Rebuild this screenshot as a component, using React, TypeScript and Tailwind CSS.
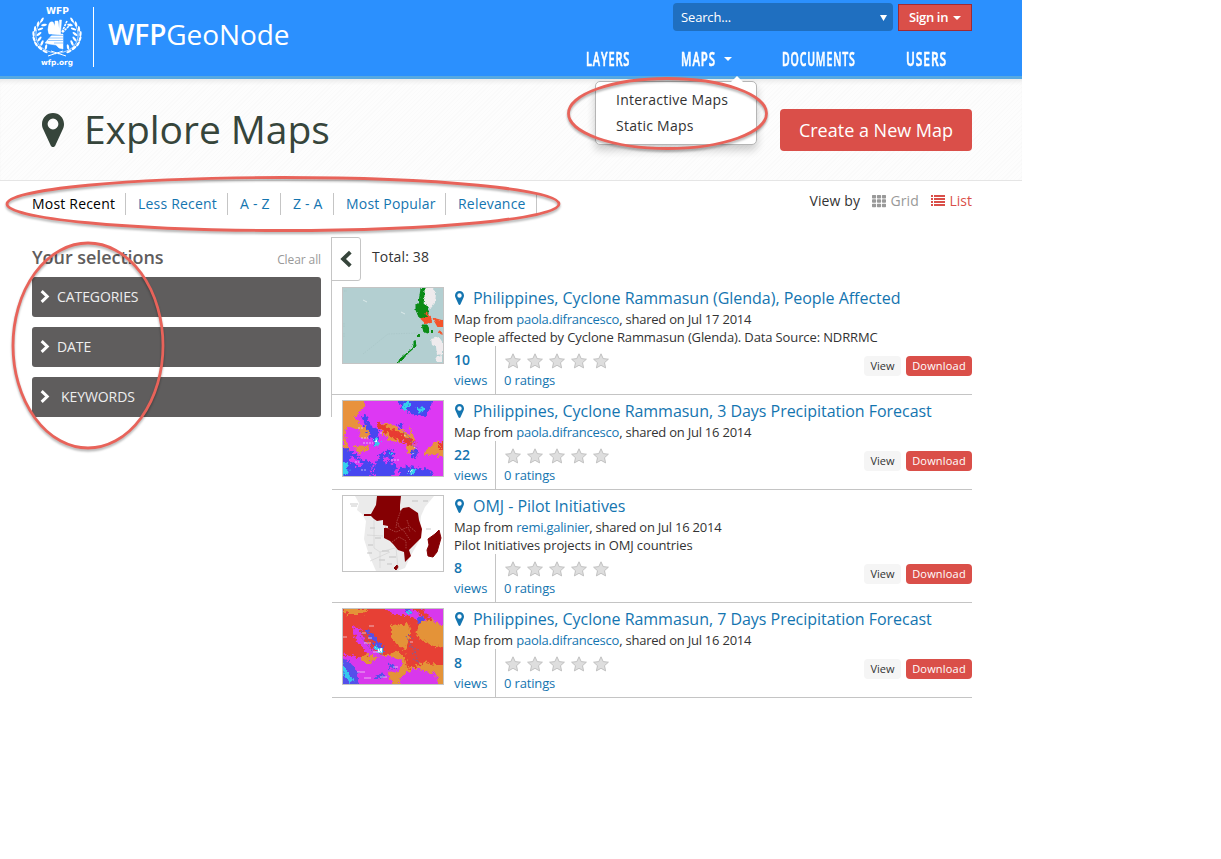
import type { ReactNode } from "react";
import { FaTh } from "react-icons/fa";

const SANS = "font-['Open_Sans',sans-serif]";

function Pin({ className }: { className: string }) {
  return (
    <svg viewBox="0 0 22 34" className={className} fill="currentColor">
      <path
        fillRule="evenodd"
        d="M11 0C4.900 0 0 4.900 0 11c0 2 .4 3.600 1.100 5L8.600 32.200C9 33.300 9.900 34 11 34s2-.7 2.400-1.800L20.900 16c.7-1.400 1.100-3 1.100-5C22 4.900 17.100 0 11 0zm0 5.600a5.400 5.400 0 1 1 0 10.800a5.400 5.400 0 0 1 0-10.800z"
      />
    </svg>
  );
}

function Chevron({ className, left = false }: { className: string; left?: boolean }) {
  return (
    <svg viewBox="0 0 10 14" className={className} fill="none" stroke="currentColor" strokeWidth="3.200">
      <path d={left ? "M8.600 1.200L2.600 7l6 5.800" : "M1.400 1.200L7.400 7l-6 5.800"} />
    </svg>
  );
}

function ListIcon() {
  return (
    <svg viewBox="0 0 14 12" className="mr-1 h-3 w-[14px] fill-[#da4f49]">
      <path d="M0 0h2v2H0zM0 3h2v2H0zM0 6h2v2H0zM0 9h2v2H0zM3 0h11v2H3zM3 3h11v2H3zM3 6h11v2H3zM3 9h11v2H3z" />
    </svg>
  );
}

const LEAVES = [
  [11, 13, -60], [7, 17, -75], [4, 22, -85], [2.5, 27, -95], [3, 32, -110], [5, 37, -125], [9, 41, -140], [14, 44.5, -155],
  [13, 18, -10], [9.5, 22, -20], [8, 27, -35], [8.5, 32, -50], [11, 36, -65], [15, 40, -80],
];

function Logo() {
  const wreath = (
    <g>
      <path d="M12 13C4 20 2 32 10 40c4 4 9 4.500 15 7" fill="none" stroke="white" strokeWidth="0.7" />
      {LEAVES.map(([x, y, r], i) => (
        <ellipse key={i} cx={x} cy={y} rx="2.900" ry="1.150" fill="white" transform={`rotate(${r} ${x} ${y})`} />
      ))}
    </g>
  );
  return (
    <svg viewBox="0 0 52 64" className="h-16 w-[52px] shrink-0">
      <text x="15" y="7.500" textLength="23" lengthAdjust="spacingAndGlyphs" fill="white" fontFamily="DejaVu Sans" fontWeight="700" fontSize="8.500">WFP</text>
      <g transform="translate(0 1)">{wreath}</g>
      <g transform="translate(52 1) scale(-1 1)">{wreath}</g>
      <path d="M17 50l15-5M35 50l-15-5" stroke="white" strokeWidth="1" fill="none" />
      <path d="M18 18q1-3 4-2l2 4 0-5 3 0 2 13h-11q-2-4 0-10zM28.500 14l2 0-1 14h-1.500zM32 28v15l-4-1-3-3-7-1-4-1 7-8z" fill="white" stroke="white" strokeWidth="0.5" />
      <path d="M36 15l-5 11M40 18l-9 9" stroke="white" strokeWidth="1.600" strokeDasharray="2.500 .7" />
      <path d="M20 29.500h12M18 32h14M17 34.500h15M23 37h9" stroke="#2b90fe" strokeWidth="0.5" />
      <text x="10" y="59" textLength="32" lengthAdjust="spacingAndGlyphs" fill="white" fontFamily="DejaVu Sans" fontWeight="700" fontSize="7.500">wfp.org</text>
    </svg>
  );
}

function NavItem({ children, className }: { children: ReactNode; className: string }) {
  return (
    <a className={`block w-10 origin-left whitespace-nowrap text-[19px] leading-[26px] font-semibold tracking-[1.5px] text-white [-webkit-text-stroke:0.6px_white] ${className}`}>
      {children}
    </a>
  );
}

function Star() {
  return (
    <svg viewBox="0 0 16 16" className="size-4">
      <path d="M8 .8l2.200 4.800 5.200.6-3.900 3.500 1.100 5.200L8 12.300l-4.600 2.600 1.100-5.200L.6 6.200l5.200-.6z" fill="#dedede" stroke="#bcbcbc" strokeWidth="0.9" />
    </svg>
  );
}

function PhilippinesMap() {
  return (
    <svg viewBox="0 0 100 75" className="size-full bg-[#b3cfd1]">
      <defs>
        <filter id="coast" x="0" y="0" width="100" height="75" filterUnits="userSpaceOnUse"><feTurbulence type="fractalNoise" baseFrequency="0.35" numOctaves="2" seed="4" /><feDisplacementMap in="SourceGraphic" scale="3" xChannelSelector="R" yChannelSelector="G" /></filter>
      </defs>
      <path d="M20 66l25-20 30-1M1 3h3M1 35v5M1 45v5" stroke="#a6c3c5" strokeWidth=".6" strokeDasharray="1.500 1" fill="none" />
      <path d="M20 12l4 2M58 24l4 2" stroke="#dceaea" />
      <g filter="url(#coast)">
        <path d="M79 0h11l3 6-1 9-4 5-6-3-4-7z" fill="#efebed" />
        <path d="M78 0h3l0 8-1 8 5 3 0 7-3 5-6-2-3-7 0-5 3-2z" fill="#078a12" stroke="#078a12" />
        <path d="M79 37l5 0 2 4-1 4-4-1z" fill="#078a12" stroke="#078a12" />
        <path d="M55 75l2-4 12-10 2-4v-4l1 0 1 5-8 7-6 7z" fill="#078a12" stroke="#078a12" />
        <path d="M74 46h3v3h-3zM88 42h2v3h-2z" fill="#078a12" />
        <path d="M79 31l8-2 1 5-5 1zM91 31l8 2 1 5-5 0zM83 25l3 4M96 43l3 3" fill="#f5532b" stroke="#f5532b" strokeWidth="2" />
        <path d="M88 51l8-2 4 6v11l-6 1-1-8-4-2zM92 69l7-1v6h-5z" fill="#efebed" />
      </g>
    </svg>
  );
}

function RainFilter({ id, seed }: { id: string; seed: number }) {
  return (
    <filter id={id} x="0" y="0" width="100" height="75" filterUnits="userSpaceOnUse">
      <feTurbulence type="fractalNoise" baseFrequency="0.32" numOctaves="3" seed={seed} />
      <feDisplacementMap in="SourceGraphic" scale="8" xChannelSelector="R" yChannelSelector="G" />
    </filter>
  );
}

function RainThree() {
  return (
    <svg viewBox="0 0 100 75" className="size-full bg-[#dd39f3]">
      <defs><RainFilter id="rain3" seed={7} /></defs>
      <g filter="url(#rain3)">
        <rect x="-10" y="-10" width="120" height="95" fill="#dd39f3" />
        <path d="M-5-5h28l-2 12-9 8 5 8-2 6-10-4-4 10-6 2z" fill="#e8923d" />
        <path d="M14 23l10 2 2 12-8 1zM11 44l14 1 2 4-12 3zM35 21l14 3 17 9 2-7 3 12 1 18-7-3-3-11-14-2-11-10z" fill="#e8923d" />
        <path d="M80 52l11-10 14-4v17l-20-1zM0 35l4 3 2 12-6-1zM33 69l8-6 5 6-2 6z" fill="#e8923d" />
        <path d="M36 23l20 9 15 9-4 3-16-8-14-9zM97 42l6-2v8h-6z" fill="#e83b31" stroke="#e83b31" strokeWidth="2" />
        <path d="M23 14l4 10 8 5 1 11-3 6-5-9-5-9-5-12zM54-5h38l-9 20-14-2-11-6zM54 22l6 3-3 4z" fill="#4646f0" />
        <path d="M-5 44l12 6 14 10 8 2-3 22h-32zM36 54l11-6 6 5-7 6 8 7-8 13-18-5zM68 48l7 1-1 9-6-1zM56 67l10-2 24 5-4 9H56z" fill="#4646f0" />
        <path d="M8 54l12 9-3 4-11-8zM40 56l6 1-3 7z" fill="#dd39f3" />
        <path d="M31 39l3-3 3 6-4 3zM59 4l4-3 5 3-6 5zM74 7l7 0 1 3-6 1zM-2 60l6 3 1 9-7 4zM46 52l4-1-1 3zM67 68l5 1-1 4-4-1z" fill="#35d1ec" stroke="#35d1ec" />
        <path d="M32 39l3 1-1 3zM65 69l4 2" fill="#fff" stroke="#fff" />
      </g>
      <path d="M15 27h6M18 37h7M20 42h10M37 32h3M12 61h6M18 69h6M48 59h8M61 34l2 1m8 11l3 2m-5 5l3-1" stroke="#e8eaff" strokeWidth=".7" strokeDasharray="2 1" />
      <path d="M60 31l4 3 4 4M63 37l8 5M68 44l7 3M69 49l5 3" fill="none" stroke="#825f9d" strokeDasharray="1 1" />
    </svg>
  );
}

function RainSeven() {
  return (
    <svg viewBox="0 0 100 75" className="size-full bg-[#e74034]">
      <defs><RainFilter id="rain7" seed={12} /></defs>
      <g filter="url(#rain7)">
        <rect x="-10" y="-10" width="120" height="95" fill="#e74034" />
        <path d="M48 17l17-2 3 9-3 8-2 9-8-4-7-9zM76 14l28-10v36l-16-4-15-9zM0 0h24l-3 5-18 0zM14 49l14-5 17 2 10-4 7 6 2 11 9-2 10-4 9 3h21v28H25z" fill="#e49338" />
        <path d="M44-5h21l19 17-12-2-10-4-10 0-8-6zM74-5h32v26L91 12zM9 17l8 3 5 12 8 8 8 4 1 6-14-5-11-12zM-5 45l20 3 10 7 12-8 13 1 9 5-2 9-12 2 8 21H-5z" fill="#d837ec" />
        <path d="M59 67l12-8 22 6 5 22-47 2z" fill="#d837ec" />
        <path d="M24 20l6 5 9 11 2 7-7-1-4-10-9-9zM62-4h7l-1 8-5-1zM74 9l7-2-1 5-5 2zM-5 49l11 3 7 9 5 24-22 4zM45 56l6-2 1 5-6 1zM32 68l8-4 2 3-5 4z" fill="#5450ea" />
        <path d="M33 37l6 3 1 4-6-1zM64 1l4 1-2 3zM-1 56l5 5 6 12-5-1-6-9z" fill="#35c9ed" stroke="#35c9ed" />
        <path d="M34 40l4 1-2 2z" fill="#fff" stroke="#fff" />
      </g>
      <path d="M18 22l14 20M17 27l12 15M63 27l9 16 3 10M65 25l5 5M66 37l10 4M69 45l5-3M70 50l7 4" fill="none" stroke="#7360a6" strokeDasharray="1.500 1.500" />
      <path d="M0 28h4M26 17h5M19 24h4M25 29h4M21 34h7M30 43h9M67 33h3M14 63h8M21 69h7M50 58h5M37 68h7" stroke="#f5e8f3" strokeWidth=".7" />
    </svg>
  );
}

function AfricaMap() {
  return (
    <svg viewBox="0 0 100 75" className="size-full bg-white">
      <path d="M12 0h79L82 11l-4 9-2 25-9 16-5 11-8 3H33l-7-16-5-16 2-18-4-7-5-4 2-7z" fill="#ebebeb" />
      <path d="M7 8h8M8 10h6M27 32h5M32 42h6M25 49h5M24 57h5M39 55h7M36 64h6M46 61h7M41 24h6M67 19h4M83 33h5M69 5h6M80 5h5M44 68h5" stroke="#aaa" strokeWidth=".6" />
      <path d="M31 24v28l6 4 15-4M24 39l16 1M37 56v16M27 65l20-9M53 51l2 22" stroke="#d0d0d0" strokeWidth=".6" fill="none" />
      <path d="M34 0L58 0 57 9 57 15 60 12 66 11 75 17 76 24 79 33 78 42 70 50 66 54 68 60 64 64 62 66 61 56 55 54 50 48 47 45 41 42 41 32 45 32 45 30 40 29 40 24 34 25 31 23 28 20 21 20 21 18 28 18 33 9z" fill="#850003" />
      <path d="M96 34l2 8-4 14-4 5-5-1-1-6 2-5-1-6 7-5z" fill="#850003" stroke="#850003" />
      <path d="M51 72l3-3 1 2-2 3z" fill="#850003" stroke="#850003" />
      <path d="M58 14l-4 11-1 7M42 31l11 5 12-5 2 5M49 46l7-5 7 4 0 8M55 27l1 4 5 4 6 9M64 24l2 6 7 6" fill="none" stroke="#bd6b67" strokeWidth=".6" strokeDasharray="1.500 1" />
    </svg>
  );
}

type Row = { title: string; author: string; date: string; desc?: string; views: number; art: ReactNode };

const ROWS: Row[] = [
  { title: "Philippines, Cyclone Rammasun (Glenda), People Affected", author: "paola.difrancesco", date: "Jul 17 2014", desc: "People affected by Cyclone Rammasun (Glenda). Data Source: NDRRMC", views: 10, art: <PhilippinesMap /> },
  { title: "Philippines, Cyclone Rammasun, 3 Days Precipitation Forecast", author: "paola.difrancesco", date: "Jul 16 2014", views: 22, art: <RainThree /> },
  { title: "OMJ - Pilot Initiatives", author: "remi.galinier", date: "Jul 16 2014", desc: "Pilot Initiatives projects in OMJ countries", views: 8, art: <AfricaMap /> },
  { title: "Philippines, Cyclone Rammasun, 7 Days Precipitation Forecast", author: "paola.difrancesco", date: "Jul 16 2014", views: 8, art: <RainSeven /> },
];

function MapRow({ row }: { row: Row }) {
  return (
    <article className="ml-px flex border-b border-[#c4c4c4] pl-[10px]">
      <div className="mt-[5px] h-[77px] w-[102px] shrink-0 border border-[#c4c4c4]">{row.art}</div>
      <div className="ml-[10px] flex flex-1 flex-col whitespace-nowrap">
        <div className="flex h-[46px] flex-col pt-[5px]">
          <h3 className="flex h-[22px] items-center text-[16px] tracking-[-0.03px] text-[#1475b0]">
            <Pin className="mr-[9px] ml-px h-[14px] w-[9px]" />
            {row.title}
          </h3>
          <p className="h-[19px] text-[13px] leading-[20px] tracking-[-0.23px] text-[#333]">
            <span className="tracking-[-0.1px]">Map from </span>
            <a className="text-[#1475b0]">{row.author}</a>, shared on {row.date}
          </p>
        </div>
        {row.desc && <p className="h-[18px] text-[13px] leading-[18px] tracking-[-0.12px] text-[#333]">{row.desc}</p>}
        <div className="flex h-12 text-[13px] text-[#1475b0]">
          <div className="w-[42px] border-r border-[#c4c4c4]">
            <div className="h-6 pt-[3px] text-[14px] leading-[22px] font-semibold">{row.views}</div>
            <div className="leading-[20px]">views</div>
          </div>
          <div className="pl-2">
            <div className="flex h-6 gap-[6px] pt-[7px] pl-px">
              {[0, 1, 2, 3, 4].map((n) => <Star key={n} />)}
            </div>
            <div className="leading-[20px] tracking-[-0.15px]">0 ratings</div>
          </div>
          <div className="mt-[10px] ml-auto flex h-5 gap-[5px] text-[11px] leading-5">
            <a className="w-[37px] rounded-[4px] bg-[#f5f5f5] text-center text-[#333]">View</a>
            <a className="w-[66px] rounded-[4px] bg-[#da4f49] text-center tracking-[0.2px] text-white">Download</a>
          </div>
        </div>
      </div>
    </article>
  );
}

const SORTS = [
  { label: "Most Recent", cls: "w-[94px] text-black" },
  { label: "Less Recent", cls: "w-[102px] pl-3 text-[#1475b0]" },
  { label: "A - Z", cls: "w-[53px] pl-3 text-[#1475b0]" },
  { label: "Z - A", cls: "w-[53px] pl-3 text-[#1475b0]" },
  { label: "Most Popular", cls: "w-[112px] pl-3 text-[#1475b0]" },
  { label: "Relevance", cls: "w-[91px] pl-3 text-[#1475b0]" },
];

export default function App() {
  return (
    <div className={`relative h-[859px] w-[1221px] overflow-hidden bg-white text-[#333] ${SANS}`}>
      <div className="w-[1022px]">
        <header className="flex h-[79px] justify-between border-b-[3px] border-[#56a9e2] bg-[#2b90fe] pr-[50px] pl-[31px]">
          <div className="flex pt-[6px]">
            <Logo />
            <div className="mt-px ml-[10px] h-[60px] w-px bg-white" />
            <div className="ml-[14px] pt-2 text-[28px] leading-[40px] tracking-[-0.1px] text-white">
              <span className="font-semibold">WFP</span>GeoNode
            </div>
          </div>
          <div className="w-[386px]">
            <div className="flex justify-end gap-[5px] pt-[3px] text-[13px] text-white">
              <div className="flex h-7 w-[220px] items-center justify-between rounded bg-[#1f6fc0] pt-px pr-[6px] pl-2 tracking-[-0.15px]">
                Search...
                <svg viewBox="0 0 7 6" className="h-[6px] w-[7px] fill-white"><path d="M0 0h7L3.500 6z" /></svg>
              </div>
              <div className="mt-px flex h-[27px] w-[74px] items-center justify-center gap-[5px] border border-[#a02a34] bg-[#da4f49] font-semibold whitespace-nowrap">
                <span className="w-[39px] tracking-[-0.35px]">Sign in</span>
                <svg viewBox="0 0 8 4" className="h-1 w-2 fill-white"><path d="M0 0h8L4 4z" /></svg>
              </div>
            </div>
            <nav className="mt-[15px] flex">
              <div className="w-[95px]"><NavItem className="scale-x-[0.58]">LAYERS</NavItem></div>
              <div className="flex w-[101px] items-center">
                <div className="w-[43px]"><NavItem className="scale-x-[0.6]">MAPS</NavItem></div>
                <svg viewBox="0 0 8 4" className="h-1 w-2 fill-white"><path d="M0 0h8L4 4z" /></svg>
              </div>
              <div className="w-[124px]"><NavItem className="scale-x-[0.555]">DOCUMENTS</NavItem></div>
              <NavItem className="scale-x-[0.63]">USERS</NavItem>
            </nav>
          </div>
        </header>

        <section className="flex h-[102px] items-start border-b border-[#e5e5e5] bg-[repeating-linear-gradient(135deg,#fdfdfd_0px,#fdfdfd_2px,#fafafa_2px,#fafafa_3px)] pr-[50px] pl-[42px] shadow-[inset_0_5px_5px_-3px_#e6e6e6]">
          <Pin className="mt-[34px] h-[34px] w-[22px] text-[#36453b]" />
          <h1 className="ml-[20px] pt-[24px] text-[39px] leading-[51px] tracking-[-0.05px] text-[#36453b]">Explore Maps</h1>
          <button className="mt-[30px] ml-auto h-[42px] w-[192px] rounded bg-[#da4f49] text-[18px] text-white">Create a New Map</button>
        </section>

        <div className="flex h-14 justify-between pr-[50px] pl-8 text-[14px]">
          <ul className="flex pt-3">
            {SORTS.map((s) => (
              <li key={s.label} className={`h-[22px] border-r border-[#c5c5c5] leading-[22px] tracking-[0.2px] whitespace-nowrap ${s.cls}`}>{s.label}</li>
            ))}
          </ul>
          <div className="flex h-5 items-center pt-[19px] whitespace-nowrap">
            <span className="w-[63px] tracking-[0.1px]">View by</span>
            <FaTh className="mr-1 size-[14px] text-[#999]" />
            <span className="w-[41px] tracking-[0.1px] text-[#999]">Grid</span>
            <ListIcon />
            <span className="text-[#da4f49]">List</span>
          </div>
        </div>

        <main className="flex pr-[50px] pl-8">
          <aside className="h-[180px] w-[289px]">
            <div className="flex h-10 justify-between">
              <h2 className="pt-[7px] text-[18px] leading-[26px] font-semibold tracking-[-0.05px] text-[#5f5d5d]">Your selections</h2>
              <a className="pt-3 text-[12px] leading-[21px] tracking-[-0.1px] text-[#999]">Clear all</a>
            </div>
            <div className="flex flex-col gap-[10px]">
              {["CATEGORIES", "DATE", "KEYWORDS"].map((label) => (
                <div key={label} className="flex h-10 items-center rounded-[3px] bg-[#5f5d5d] pb-[2px] pl-2 text-[14px] tracking-[-0.08px] text-[#eee]">
                  <Chevron className="mr-[7px] h-[13px] w-[10px] text-white" />
                  <span className={label === "KEYWORDS" ? "pl-1" : ""}>{label}</span>
                </div>
              ))}
            </div>
          </aside>
          <div className="ml-[10px] h-[180px] w-px shrink-0 bg-[#c5c5c5]" />
          <div className="-ml-px flex-1">
            <div className="flex h-[45px]">
              <div className="flex h-11 w-[30px] items-center justify-center rounded-r-[3px] border border-[#c5c5c5] text-[#36453b]">
                <Chevron left className="h-[18px] w-[12px]" />
              </div>
              <span className="ml-[11px] pt-[9px] text-[14px] leading-[22px] tracking-[0.15px]">Total: 38</span>
            </div>
            {ROWS.map((row, i) => <MapRow key={i} row={row} />)}
          </div>
        </main>
      </div>

      <div className="absolute top-[81px] left-[595px] h-[64px] w-[162px] rounded-[5px] border border-[#b5b5b5] bg-white pt-[5px] pl-5 text-[14px] leading-[26px] tracking-[0.25px] shadow-[0_5px_9px_rgba(0,0,0,0.2)]">
        <svg viewBox="0 0 12 6" className="absolute -top-[6px] left-[135px] h-[6px] w-3 fill-white"><path d="M0 6L6 0l6 6z" /></svg>
        <div>Interactive Maps</div>
        <div>Static Maps</div>
      </div>

      <svg viewBox="0 0 1221 859" className="pointer-events-none absolute inset-0 h-[859px] w-[1221px] drop-shadow-[0_2px_1px_rgba(0,0,0,0.3)]" fill="none" stroke="#e8635a" strokeWidth="2.800">
        <ellipse cx="667.500" cy="113.500" rx="99" ry="35" />
        <ellipse cx="283" cy="204" rx="276" ry="26.500" />
        <ellipse cx="88" cy="345.500" rx="75" ry="102.500" />
      </svg>
    </div>
  );
}
